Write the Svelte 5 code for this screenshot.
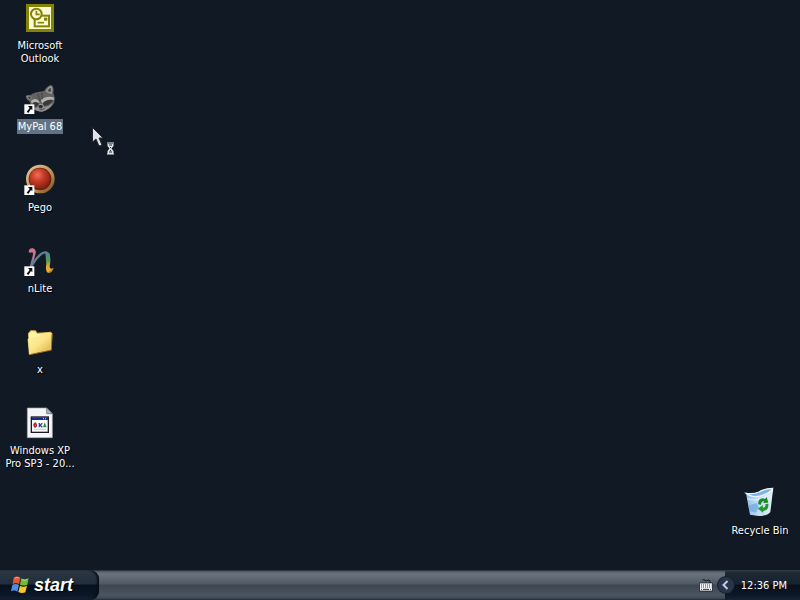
<script>
  const shortcuts = [
    { id: 'outlook', label: 'Microsoft Outlook' },
    { id: 'mypal', label: 'MyPal 68', link: true, selected: true },
    { id: 'pego', label: 'Pego', link: true },
    { id: 'nlite', label: 'nLite', link: true },
    { id: 'folder', label: 'x' },
    { id: 'program', label: 'Windows XP Pro SP3 - 20...' }
  ];
  const bin = { id: 'bin', label: 'Recycle Bin' };
</script>

{#snippet icon(item)}
  <button class="icon" class:selected={item.selected}>
    <svg viewBox="0 0 96 96" aria-hidden="true">
      {#if item.id === 'outlook'}
        <rect x="6" y="6" width="84" height="84" fill="#858208" />
        <rect x="15" y="15" width="66" height="66" fill="#fbf9d4" />
        <rect x="32" y="41" width="43" height="32" fill="#fbf9d4" stroke="#858208" stroke-width="6" />
        <path d="M41 62h19" stroke="#858208" stroke-width="5" />
        <rect x="60" y="47" width="10" height="9" fill="#858208" />
        <circle cx="37" cy="36" r="16" fill="#fbf9d4" stroke="#858208" stroke-width="6" />
        <path d="M37 26v11h10" fill="none" stroke="#858208" stroke-width="5" />
      {:else if item.id === 'mypal'}
        <path d="M5 40Q8 34 18 37Q30 27 60 24Q70 8 82 6Q91 11 88 29Q95 44 91 59Q82 76 55 86Q34 86 24 74L16 55Q6 50 5 40Z" fill="#626261" />
        <path d="M9 41Q17 36 23 44L17 50Z" fill="#37373a" stroke="#929290" stroke-width="3" />
        <path d="M68 25Q74 11 81 12Q86 18 81 31Z" fill="#4a4a4b" stroke="#9b9b98" stroke-width="4" />
        <path d="M21 53Q34 43 44 53L47 60Q34 55 24 64ZM50 53Q65 36 89 43L90 51Q71 45 57 62Z" fill="#b3b2ae" />
        <path d="M25 60Q37 53 45 62Q40 74 28 71ZM56 61Q68 48 87 52Q80 66 61 69Z" fill="#39393b" />
        <path d="M41 33L49 55M54 29L54 48" stroke="#50504f" stroke-width="5" />
        <path d="M30 76Q41 74 46 62L56 62L61 72Q76 69 87 59Q80 79 54 86Q37 86 30 76Z" fill="#929190" />
        <path d="M43 69Q48 64 57 68L54 76L46 76Z" fill="#2a2a2c" />
        <path d="M47 80Q56 82 62 76" fill="none" stroke="#4b4b4b" stroke-width="3" />
      {:else if item.id === 'pego'}
        <defs>
          <radialGradient id="ball" cx=".4" cy=".32" r=".7"><stop offset="0" stop-color="#ed7258" /><stop offset=".45" stop-color="#c83b28" /><stop offset="1" stop-color="#80200f" /></radialGradient>
          <linearGradient id="ring" x1="0" y1="0" x2="1" y2="1"><stop offset="0" stop-color="#e5ce9d" /><stop offset=".6" stop-color="#bd8d55" /><stop offset="1" stop-color="#704220" /></linearGradient>
        </defs>
        <circle cx="49" cy="45" r="43" fill="url(#ring)" />
        <circle cx="48" cy="45" r="34" fill="#6b2010" />
        <circle cx="47" cy="44" r="31" fill="url(#ball)" />
      {:else if item.id === 'nlite'}
        <defs>
          <linearGradient id="stroke1" x1="0" y1="0" x2="0" y2="1"><stop offset="0" stop-color="#dc7188" /><stop offset=".45" stop-color="#b77992" /><stop offset="1" stop-color="#647da3" /></linearGradient>
          <linearGradient id="stroke3" x1="0" y1="0" x2="0" y2="1"><stop offset="0" stop-color="#4b8989" /><stop offset=".42" stop-color="#5d9a58" /><stop offset=".63" stop-color="#d8ab27" /><stop offset="1" stop-color="#e7ad37" /></linearGradient>
        </defs>
        <path d="M14 22Q14 9 26 10Q39 14 34 29L25 63L17 65L27 29Q28 18 20 23Z" fill="url(#stroke1)" />
        <path d="M16 76Q37 35 55 25Q69 17 73 30" fill="none" stroke="#607f96" stroke-width="7" />
        <path d="M64 24L76 23Q82 45 77 63Q76 75 88 69Q84 86 71 83Q63 78 67 58Z" fill="url(#stroke3)" />
        <path d="M75 81Q83 79 88 70" fill="none" stroke="#d46b32" stroke-width="3" />
      {:else if item.id === 'folder'}
        <defs>
          <linearGradient id="paper" x1="0" y1="0" x2="1" y2="1"><stop offset="0" stop-color="#fff7aa" /><stop offset=".5" stop-color="#fae385" /><stop offset="1" stop-color="#dca63e" /></linearGradient>
        </defs>
        <path d="M12 22L20 13L35 13L40 20L80 17L84 22L81 71L16 85Z" fill="#dfb64f" />
        <path d="M14 24L22 16L33 16L39 24L79 20L79 67L17 81Z" fill="#fff3a6" />
        <path d="M12 39L42 33L47 27L84 22L81 71L16 85Z" fill="url(#paper)" stroke="#f9e693" stroke-width="2" />
        <path d="M17 86L82 72L84 24" fill="none" stroke="#a16f16" stroke-width="3" />
      {:else if item.id === 'program'}
        <path d="M10 3H68L85 20V92H10Z" fill="#f5f6f7" stroke="#a1a8b0" stroke-width="2" />
        <path d="M68 3V20H85Z" fill="#adb6c1" stroke="#586373" stroke-width="2" />
        <rect x="22" y="30" width="51" height="46" fill="#fff" stroke="#1c1c22" stroke-width="4" />
        <rect x="24" y="31" width="48" height="8" fill="#182b87" />
        <path d="M57 35h12" stroke="#d4dae8" stroke-width="3" stroke-dasharray="3" />
        <path d="M34 49q-7 4-1 11q7-3 1-11z" fill="none" stroke="#a82b35" stroke-width="5" />
        <path d="M46 48v13M55 49l-7 6l7 6" fill="none" stroke="#28489a" stroke-width="4" />
        <path d="M62 46L68 61H57Z" fill="#2a9152" />
        <path d="M30 67h36" stroke="#c9ced4" stroke-width="3" />
      {:else if item.id === 'bin'}
        <defs>
          <linearGradient id="glass" x1="0" y1="0" x2="1" y2="0"><stop offset="0" stop-color="#91bfe9" /><stop offset=".4" stop-color="#bddaf1" /><stop offset="1" stop-color="#e4eef6" /></linearGradient>
        </defs>
        <path d="M6 19Q25 22 43 15Q63 3 86 4Q89 7 86 18L79 75Q73 86 43 87L18 83Z" fill="url(#glass)" />
        <path d="M6 19Q29 22 45 15Q65 4 86 4Q80 18 49 27Q23 33 6 19Z" fill="#82b2de" stroke="#e9f4fc" stroke-width="4" />
        <path d="M13 56L38 48L45 62L35 77L17 72Z" fill="#6fa8e4" opacity=".75" />
        <path d="M10 35Q27 42 46 36L75 26" fill="none" stroke="#eef6fc" stroke-width="4" opacity=".7" />
        <path d="M42 52Q43 33 57 34L63 36L68 30L73 47L57 48L61 43Q52 40 51 53Z" fill="#188c27" />
        <path d="M73 50Q76 70 58 72L57 77L42 65L56 54L57 62Q66 62 64 51Z" fill="#239a31" />
      {/if}
      {#if item.link}
        <rect x="1" y="64" width="30" height="29" fill="#fff" />
        <path d="M12 69H25V82L21 78L13 90L8 86L17 75Z" fill="#080b10" />
      {/if}
    </svg>
    <span class="label">{item.label}</span>
  </button>
{/snippet}

<div class="screen">
  <main>
    <nav aria-label="Desktop">
      {#each shortcuts as item}
        {@render icon(item)}
      {/each}
    </nav>
    {@render icon(bin)}
    <svg class="pointer" viewBox="0 0 24 30" aria-hidden="true">
      <path d="M.5 .5V15L4 12L7 19L10 18L7 11H11Z" fill="#dfe3e7" stroke="#252c35" />
      <path d="M15 16h7M15 27h7" stroke="#e8ebed" stroke-width="1" />
      <path d="M15.500 17h6v2l-2 2.500l2 2.500v3h-6v-3l2-2.500l-2-2.500z" fill="#e2e5e8" />
      <path d="M17 18h3M18.500 20v1M18.500 23v1M17 25h3" stroke="#202832" stroke-width="1" />
    </svg>
  </main>
  <footer>
    <button class="start">
      <svg viewBox="0 0 60 60" aria-hidden="true">
        <path d="M11 8Q21 1 31 8L27 27Q18 21 8 27Z" fill="#e9582c" />
        <path d="M34 10Q44 16 56 9L52 29Q42 34 30 29Z" fill="#72bb31" />
        <path d="M7 30Q17 24 27 30L22 50Q13 43 3 49Z" fill="#4f8de1" />
        <path d="M30 32Q40 38 51 32L46 52Q36 57 25 51Z" fill="#f5c72c" />
        <path d="M14 10Q22 5 27 9M37 14Q44 18 51 14" fill="none" stroke="#ffffff70" stroke-width="3" />
      </svg>
      <span>start</span>
    </button>
    <div class="tasks">
      <svg class="keyboard" viewBox="0 0 42 39" aria-hidden="true">
        <path d="M10 3q4-3 8 1t8 0t7 3v5" fill="none" stroke="#0c1118" stroke-width="3" />
        <rect x="2" y="12" width="38" height="24" fill="#f4f6f7" stroke="#10161e" stroke-width="2" />
        <path d="M6 18h31M6 24h31" stroke="#26303b" stroke-width="3" stroke-dasharray="3" /><path d="M6 31h3M12 31h18M33 31h3" stroke="#26303b" stroke-width="3" />
      </svg>
    </div>
    <div class="tray">
      <button class="chevron" aria-label="Show hidden icons">
        <svg viewBox="0 0 16 16" aria-hidden="true"><path d="M9.500 4L5.500 8L9.500 12" fill="none" stroke="#c3cddb" stroke-width="2" /></svg>
      </button>
      <time>12:36 PM</time>
    </div>
  </footer>
</div>

<style>
  .screen {
    display: flex;
    flex-direction: column;
    min-height: 100vh;
    background: #101924;
    color: #fff;
    font: 11px/13px Tahoma, "DejaVu Sans Condensed", sans-serif;
  }
  button { border: 0; padding: 0; background: none; color: inherit; font: inherit; }
  main { position: relative; flex: 1; display: flex; justify-content: space-between; align-items: flex-end; }
  nav { align-self: flex-start; display: flex; flex-direction: column; padding-top: 2px; }
  .icon { display: flex; flex-direction: column; align-items: center; gap: 4px; width: 80px; height: 81px; }
  main > .icon { margin-bottom: 2px; }
  .icon svg { width: 32px; height: 32px; flex: none; }
  .label { max-width: 76px; padding: 1px; text-align: center; text-shadow: 1px 1px 1px #000; }
  .selected .label { background: #647384; text-shadow: none; }
  .pointer { position: absolute; left: 92px; top: 127px; width: 24px; height: 30px; }
  footer {
    display: flex;
    height: 30px;
    background: linear-gradient(#222b37 0, #5d6772 2px, #6a747f 4px, #4f5964 14px, #3d4651 15px, #4a5460 25px, #414b57 28px, #202a36 30px);
  }
  .start {
    display: flex;
    align-items: center;
    gap: 4px;
    width: 99px;
    padding-left: 10px;
    border-radius: 0 9px 9px 0;
    background: linear-gradient(#343d49 0, #283441 3px, #222e3c 14px, #07101c 15px, #0b1727 25px, #172335 30px);
    box-shadow: inset -2px 0 2px #080e17;
    font: italic bold 18px/24px "Liberation Sans", sans-serif;
    text-shadow: 1px 1px 1px #000;
  }
  .start svg { width: 20px; height: 20px; }
  .tasks { flex: 1; display: flex; align-items: center; justify-content: flex-end; padding-right: 12px; }
  .keyboard { width: 14px; height: 13px; }
  .tray {
    display: flex;
    align-items: center;
    gap: 7px;
    padding-right: 13px;
    background: linear-gradient(#343d49 0, #1d2835 3px, #172331 14px, #07101c 15px, #0b1727 25px, #172335 30px);
  }
  .chevron { width: 16px; height: 16px; margin-left: -7px; border-radius: 50%; background: #27344a; box-shadow: 0 0 0 1px #17202d; }
  .chevron svg { display: block; width: 16px; height: 16px; }
</style>
